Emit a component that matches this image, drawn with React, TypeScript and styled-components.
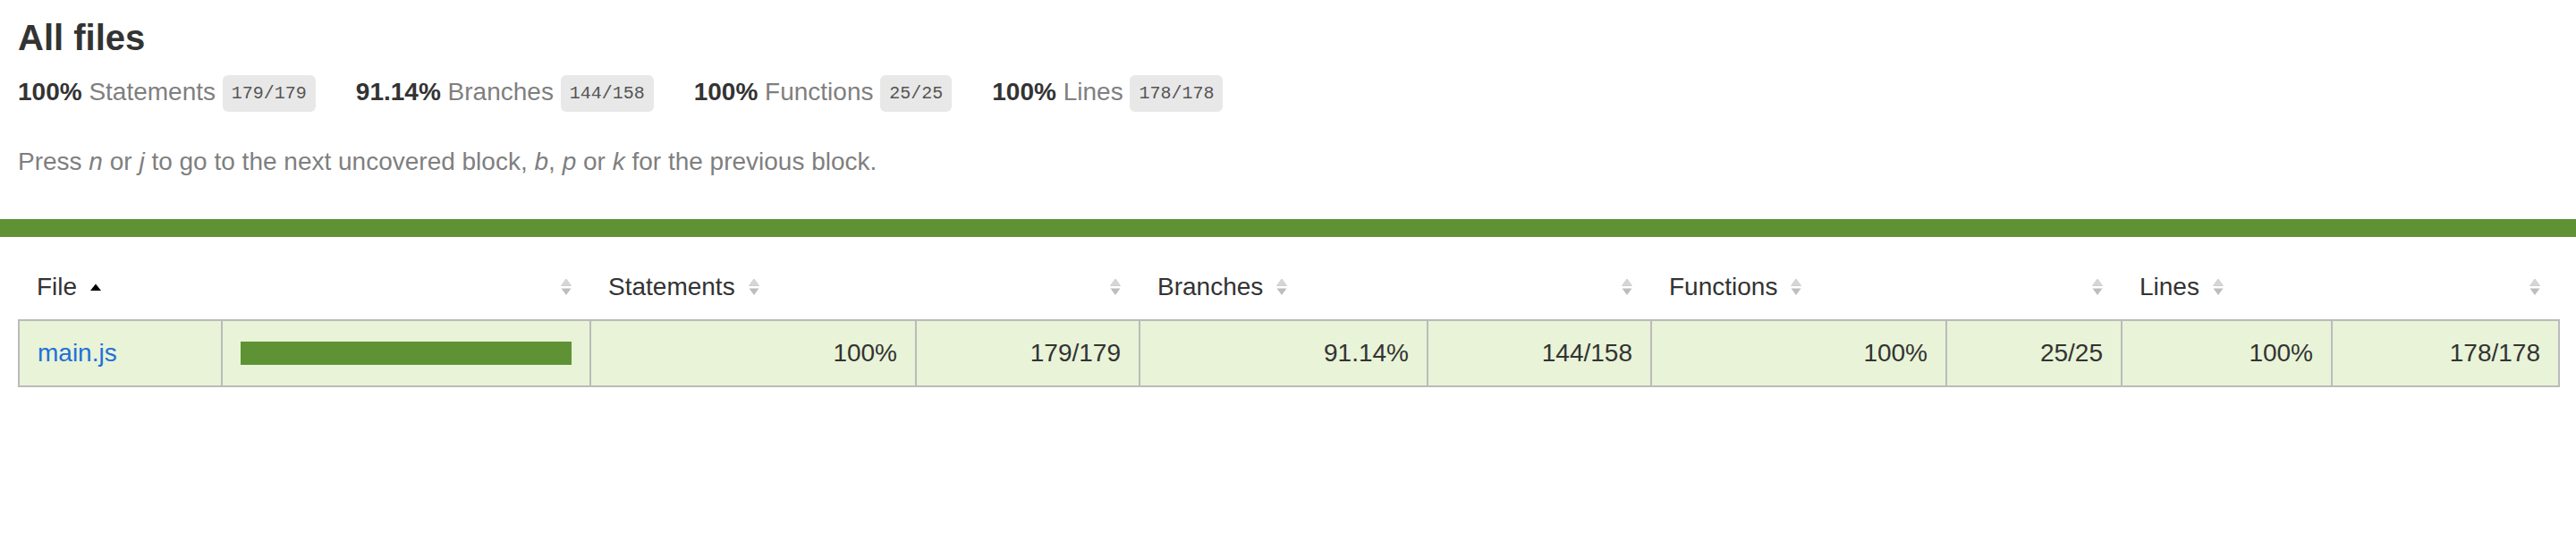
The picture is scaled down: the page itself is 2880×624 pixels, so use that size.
import React from "react";
import styled, { createGlobalStyle } from "styled-components";

const GlobalStyle = createGlobalStyle`
  *, *::before, *::after { box-sizing: border-box; }
  html, body { margin: 0; padding: 0; background: #fff; }
  body {
    font-family: "Liberation Sans", Arial, Helvetica, sans-serif;
    font-size: 28px;
    color: #333;
  }
`;

const Page = styled.div`
  width: 100%;
`;

const Section = styled.div`
  padding: 20px;
`;

const Title = styled.h1`
  font-size: 40px;
  font-weight: bold;
  margin: 0;
  color: #333;
`;

const StatsRow = styled.div`
  display: flex;
  flex-wrap: wrap;
  padding-top: 2px;
`;

const Stat = styled.div`
  padding: 20px 45px 20px 0;
`;

const Strong = styled.span`
  font-weight: bold;
`;

const Quiet = styled.span`
  color: #7f7f7f;
`;

const Fraction = styled.span`
  font-family: "Liberation Mono", "DejaVu Sans Mono", monospace;
  font-size: 20px;
  color: #555;
  background: #e8e8e8;
  padding: 9px 10px;
  border-radius: 6px;
  vertical-align: middle;
`;

const Hint = styled.p`
  color: #7f7f7f;
  margin: 26px 0 28px;
`;

const StatusLine = styled.div<{ $level: "high" | "low" }>`
  height: 20px;
  background: ${(p) => (p.$level === "high" ? "#5f9235" : "#c21f39")};
`;

const SummaryTable = styled.table`
  border-collapse: collapse;
  width: 100%;
  table-layout: fixed;
`;

const HeadRow = styled.tr`
  border-bottom: 2px solid #bbb;
`;

const Th = styled.th<{ $align: "left" | "right" }>`
  padding: 20px;
  font-weight: normal;
  white-space: nowrap;
  text-align: ${(p) => p.$align};
  color: #333;
`;

const Body = styled.tbody`
  border: 2px solid #bbb;
`;

const Row = styled.tr`
  border-bottom: 2px solid #bbb;
  background: #e8f3d7;
`;

const Td = styled.td<{ $align: "left" | "right" }>`
  padding: 20px;
  border-right: 2px solid #bbb;
  text-align: ${(p) => p.$align};
  white-space: nowrap;
  color: #333;
  &:last-child { border-right: none; }
`;

const FileLink = styled.a`
  color: #1f70d8;
  text-decoration: none;
`;

const Chart = styled.div`
  line-height: 0;
`;

const CoverFill = styled.div`
  display: inline-block;
  height: 26px;
  background: #5f9235;
`;

const SorterBox = styled.svg`
  display: inline-block;
  width: 14px;
  height: 22px;
  margin-left: 14px;
  margin-bottom: -2px;
`;

const Sorter = ({ sorted }: { sorted?: boolean }) =>
  sorted ? (
    <SorterBox viewBox="0 0 14 22">
      <path d="M1 15 L7 7.5 L13 15 Z" fill="#000" />
    </SorterBox>
  ) : (
    <SorterBox viewBox="0 0 14 22">
      <path d="M1.5 9.5 L7 2 L12.5 9.5 Z" fill="#d6d6d6" stroke="#c8c8c8" strokeWidth="0.8" />
      <path d="M1.5 12.5 L7 20 L12.5 12.5 Z" fill="#bdbdbd" />
    </SorterBox>
  );

type Metric = { label: string; pct: string; frac: string };

const metrics: Metric[] = [
  { label: "Statements", pct: "100%", frac: "179/179" },
  { label: "Branches", pct: "91.14%", frac: "144/158" },
  { label: "Functions", pct: "100%", frac: "25/25" },
  { label: "Lines", pct: "100%", frac: "178/178" },
];

const colWidths = [227, 412, 364, 250, 322, 250, 330, 196, 235, 254];

export default function App() {
  return (
    <Page>
      <GlobalStyle />
      <Section>
        <Title>All files</Title>
        <StatsRow>
          {metrics.map((m) => (
            <Stat key={m.label}>
              <Strong>{m.pct} </Strong> <Quiet>{m.label}</Quiet>{" "}
              <Fraction>{m.frac}</Fraction>
            </Stat>
          ))}
        </StatsRow>
        <Hint>
          Press <em>n</em> or <em>j</em> to go to the next uncovered block, <em>b</em>,{" "}
          <em>p</em> or <em>k</em> for the previous block.
        </Hint>
      </Section>
      <StatusLine $level="high" />
      <Section>
        <SummaryTable>
          <colgroup>
            {colWidths.map((w, i) => (
              <col key={i} style={{ width: `${w}px` }} />
            ))}
          </colgroup>
          <thead>
            <HeadRow>
              <Th $align="left">
                File
                <Sorter sorted />
              </Th>
              <Th $align="right">
                <Sorter />
              </Th>
              {metrics.map((m) => (
                <React.Fragment key={m.label}>
                  <Th $align="left">
                    {m.label}
                    <Sorter />
                  </Th>
                  <Th $align="right">
                    <Sorter />
                  </Th>
                </React.Fragment>
              ))}
            </HeadRow>
          </thead>
          <Body>
            <Row>
              <Td $align="left">
                <FileLink href="#">main.js</FileLink>
              </Td>
              <Td $align="left">
                <Chart>
                  <CoverFill style={{ width: "100%" }} />
                </Chart>
              </Td>
              {metrics.map((m) => (
                <React.Fragment key={m.label}>
                  <Td $align="right">{m.pct}</Td>
                  <Td $align="right">{m.frac}</Td>
                </React.Fragment>
              ))}
            </Row>
          </Body>
        </SummaryTable>
      </Section>
    </Page>
  );
}
